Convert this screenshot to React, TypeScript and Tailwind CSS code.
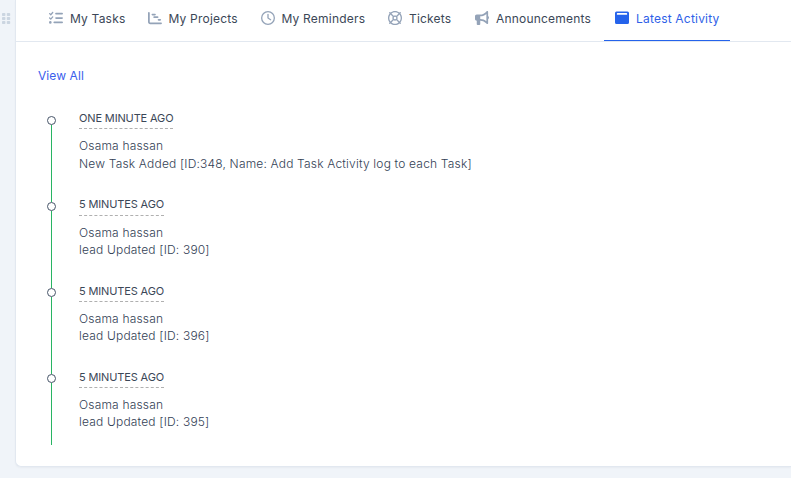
import type { ReactNode } from 'react';
import { FaListCheck, FaChartGantt, FaRegClock, FaRegLifeRing, FaBullhorn } from 'react-icons/fa6';

function WindowIcon() {
  return (
    <svg width="14" height="14" viewBox="0 0 14 14" fill="currentColor">
      <path fillRule="evenodd" d="M1.5 .5h11A1.5 1.5 0 0 1 14 2v9.500a1.500 1.500 0 0 1-1.500 1.500h-11A1.500 1.500 0 0 1 0 11.500V2A1.500 1.500 0 0 1 1.500 .5ZM2.400 2a.5 .5 0 0 0-.5 .5v1.300h10.200V2.500a.5 .5 0 0 0-.5-.5Z" />
    </svg>
  );
}

function Tab({ icon, label, width, active = false }: { icon: ReactNode; label: string; width: string; active?: boolean }) {
  return (
    <button
      className={`flex h-[41px] shrink-0 items-start gap-[7px] border-b pt-[9px] pl-[11px] text-[12px] leading-[19px] font-normal tracking-[0.200px] whitespace-nowrap ${width} ${
        active ? 'border-[#2563eb] text-[#2f5fe8]' : 'border-transparent text-[#3b4757]'
      }`}
    >
      <span className={`mt-[2px] text-[14px] ${active ? 'text-[#2563eb]' : 'text-[#94a3b8]'}`}>{icon}</span>
      {label}
    </button>
  );
}

const activities = [
  { time: 'ONE MINUTE AGO', text: 'New Task Added [ID:348, Name: Add Task Activity log to each Task]' },
  { time: '5 MINUTES AGO', text: 'lead Updated [ID: 390]' },
  { time: '5 MINUTES AGO', text: 'lead Updated [ID: 396]' },
  { time: '5 MINUTES AGO', text: 'lead Updated [ID: 395]' },
];

export default function App() {
  return (
    <div className="flex h-[478px] w-[791px] overflow-hidden bg-[#f0f4f9] font-['Inter',sans-serif]">
      <div className="w-[15px] shrink-0 pt-[12px] pl-[1px]">
        <svg width="10" height="13" viewBox="0 0 10 13" fill="#cbd5e1">
          {[1, 5, 9].map((y) => (
            <g key={y}>
              <rect x="1" y={y} width="3.4" height="3" rx="0.8" />
              <rect x="5.8" y={y} width="3.4" height="3" rx="0.8" />
            </g>
          ))}
        </svg>
      </div>
      <div className="h-[467px] grow rounded-bl-md border-b border-l border-[#e2e8f0] bg-white shadow-[0_1px_2px_rgba(15,23,42,0.04)]">
        <nav className="flex h-[42px] border-b border-[#e2e8f0] pl-[22px]">
          <Tab icon={<FaListCheck />} label="My Tasks" width="w-[98.500px]" />
          <Tab icon={<FaChartGantt />} label="My Projects" width="w-[113px]" />
          <Tab icon={<FaRegClock />} label="My Reminders" width="w-[127.500px]" />
          <Tab icon={<FaRegLifeRing />} label="Tickets" width="w-[87px]" />
          <Tab icon={<FaBullhorn />} label="Announcements" width="w-[140px]" />
          <Tab icon={<WindowIcon />} label="Latest Activity" width="w-[126px]" active />
        </nav>
        <div className="pt-[24px] pl-[22px] text-[12px] leading-5 tracking-[0.080px] text-[#3b60ec]">View All</div>
        <div className="mt-[23px] ml-[31px]">
          {activities.map((a, i) => (
            <div key={i} className="flex">
              <div className={`flex w-[9px] shrink-0 flex-col items-center ${i === 3 ? 'h-[77.500px]' : 'h-[86.160px]'}`}>
                <span className={`h-[7px] w-px ${i === 0 ? '' : 'bg-[#28b463]'}`} />
                <span className="h-[9px] w-[9px] shrink-0 rounded-full border border-[#475569] bg-white" />
                <span className="w-px grow bg-[#28b463]" />
              </div>
              <div className="ml-[23px] text-[12px] leading-[17.500px] font-light tracking-[0.180px] whitespace-nowrap text-[#334155]">
                <div className="mb-[8px] w-fit border-b border-dashed border-[#b0b0b0] pt-[1.250px] pb-[0.650px] text-[11px] font-normal tracking-[-0.140px] text-[#3b4757]">{a.time}</div>
                <p>Osama hassan</p>
                <p>{a.text}</p>
              </div>
            </div>
          ))}
        </div>
      </div>
    </div>
  );
}
